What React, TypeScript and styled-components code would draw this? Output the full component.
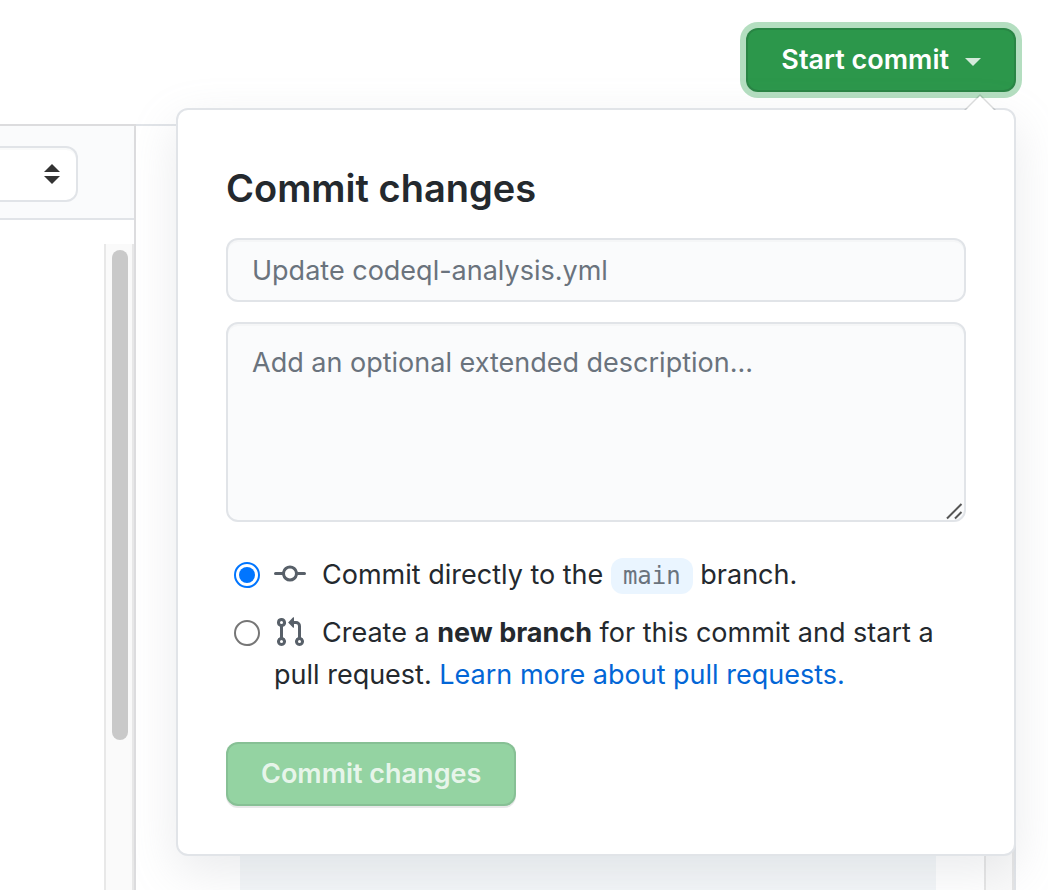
import React, { useState } from "react";
import styled, { createGlobalStyle } from "styled-components";

const GlobalStyle = createGlobalStyle`
  *, *::before, *::after { box-sizing: border-box; }
  body {
    margin: 0;
    background: #fff;
    color: #24292e;
    font-family: Inter, "Liberation Sans", sans-serif;
    font-size: 27px;
    line-height: 42px;
  }
`;

const Page = styled.div`
  min-height: 100vh;
  display: flex;
  flex-direction: column;
  overflow: hidden;
`;

const Header = styled.header`
  display: flex;
  justify-content: flex-end;
  padding: 28px 32px 32px;
`;

const CommitMenu = styled.div`
  position: relative;
`;

const Button = styled.button`
  display: flex;
  align-items: center;
  gap: 16px;
  height: 64px;
  padding: 0 33px;
  border: 2px solid rgba(27, 31, 35, 0.15);
  border-radius: 12px;
  background: #2c974b;
  color: #fff;
  font: inherit;
  font-weight: 600;
  white-space: nowrap;
  cursor: pointer;

  &:disabled {
    background: #94d3a2;
    border-color: rgba(27, 31, 35, 0.1);
    color: rgba(255, 255, 255, 0.8);
    box-shadow: 0 2px 0 rgba(27, 31, 35, 0.1);
    cursor: default;
  }
`;

const StartButton = styled(Button)`
  box-shadow: 0 0 0 6px rgba(46, 164, 79, 0.36);
`;

const DropdownCaret = styled.span`
  margin-top: 4px;
  border: 8px solid transparent;
  border-top-color: rgba(255, 255, 255, 0.8);
  border-bottom-width: 0;
`;

const Popover = styled.form`
  position: absolute;
  z-index: 1;
  top: 80px;
  right: 0;
  width: 840px;
  max-width: calc(100vw - 64px);
  padding: 48px;
  border: 2px solid #e1e4e8;
  border-radius: 12px;
  background: #fff;
  box-shadow: 0 16px 48px rgba(149, 157, 165, 0.2);

  &::before,
  &::after {
    content: "";
    position: absolute;
    border-style: solid;
    border-color: transparent;
    border-top-width: 0;
  }
  &::before {
    top: -16px;
    right: 18px;
    border-width: 0 16px 16px;
    border-bottom-color: rgba(27, 31, 35, 0.15);
  }
  &::after {
    top: -14px;
    right: 20px;
    border-width: 0 14px 14px;
    border-bottom-color: #fff;
  }
`;

const Title = styled.h2`
  margin: 0 0 20px;
  font-size: 38px;
  line-height: 60px;
  font-weight: 600;
`;

const fieldStyle = `
  display: block;
  width: 100%;
  border: 2px solid #e1e4e8;
  border-radius: 12px;
  background: #fafbfc;
  box-shadow: inset 0 2px 0 rgba(225, 228, 232, 0.2);
  color: #24292e;
  font: inherit;
  outline: none;
  &::placeholder { color: #6a737d; opacity: 1; }
`;

const TextInput = styled.input`
  ${fieldStyle}
  height: 64px;
  padding: 0 24px;
  margin-bottom: 20px;
`;

const DescriptionField = styled.div`
  position: relative;
  margin-bottom: 32px;
`;

const TextArea = styled.textarea`
  ${fieldStyle}
  height: 200px;
  padding: 18px 24px;
  resize: vertical;
  &::-webkit-resizer { background: transparent; }
`;

const ResizeGrip = styled.svg`
  position: absolute;
  right: 2px;
  bottom: 2px;
  pointer-events: none;
`;

const Option = styled.div`
  display: flex;
  align-items: flex-start;
  padding-left: 8px;
  margin-bottom: 16px;
`;

const Radio = styled.input`
  appearance: none;
  flex: none;
  display: grid;
  place-items: center;
  width: 26px;
  height: 26px;
  margin: 8px 14px 0 0;
  border: 2px solid #767676;
  border-radius: 50%;
  background: #fff;

  &:checked { border-color: #0075ff; }
  &:checked::before {
    content: "";
    width: 16px;
    height: 16px;
    border-radius: 50%;
    background: #0075ff;
  }
`;

const OptionIcon = styled.svg`
  width: 32px;
  height: 32px;
  margin-right: 16px;
  vertical-align: -6px;
  fill: #586069;
`;

const BranchName = styled.code`
  display: inline-block;
  padding: 0 12px;
  border-radius: 12px;
  background: #eaf5ff;
  color: #6a737d;
  font-family: "DejaVu Sans Mono", "Liberation Mono", monospace;
  font-size: 24px;
  line-height: 36px;
`;

const Link = styled.a`
  color: #0366d6;
  text-decoration: none;
`;

const Actions = styled.div`
  display: flex;
  padding-top: 30px;
`;

const Workspace = styled.main`
  flex: 1;
  display: flex;
  padding-right: 32px;
`;

const EditorPane = styled.section`
  flex: none;
  width: 136px;
  display: flex;
  flex-direction: column;
  border-top: 2px solid #dcdcde;
  border-right: 2px solid #dcdcde;
`;

const EditorToolbar = styled.div`
  padding: 20px 56px 16px 0;
  border-bottom: 2px solid #e1e4e8;
  background: #fafbfc;
`;

const SelectBox = styled.div`
  display: grid;
  grid-template-columns: 1fr;
  align-items: center;
  justify-items: end;
  > * { grid-area: 1 / 1; }
`;

const Select = styled.select`
  appearance: none;
  width: 100%;
  height: 56px;
  border: 2px solid #e1e4e8;
  border-left: 0;
  border-radius: 0 12px 12px 0;
  background: #fff;
  box-shadow: inset 0 2px 0 rgba(225, 228, 232, 0.2);
  color: #24292e;
  font: inherit;
`;

const SelectArrows = styled.svg`
  margin-right: 18px;
  fill: #333;
  pointer-events: none;
`;

const ScrollTrack = styled.div`
  flex: 1;
  align-self: flex-end;
  width: 30px;
  margin-top: 24px;
  padding: 6px;
  border: solid #e8e8e8;
  border-width: 0 2px;
  background: #fafafa;
`;

const ScrollThumb = styled.div`
  width: 16px;
  height: 490px;
  border-radius: 8px;
  background: #c9c9c9;
`;

const DocsPane = styled.section`
  flex: 1;
  display: flex;
  border: solid #e1e4e8;
  border-width: 2px 2px 0 0;
`;

const DocsBody = styled.div`
  flex: 1;
  padding: 96px 48px 0 104px;
  display: flex;
`;

const CodeSample = styled.div`
  flex: 1;
  background: #f3f6f8;
`;

const DocsTrack = styled.div`
  width: 30px;
  border: solid #e5e5e5;
  border-width: 0 2px;
  background: #fafafa;
`;

export default function App() {
  const [target, setTarget] = useState("direct");

  return (
    <>
      <GlobalStyle />
      <Page>
        <Header>
          <CommitMenu>
            <StartButton type="button" aria-expanded="true">
              Start commit
              <DropdownCaret />
            </StartButton>
            <Popover>
              <Title>Commit changes</Title>
              <TextInput aria-label="Commit message" placeholder="Update codeql-analysis.yml" />
              <DescriptionField>
                <TextArea
                  aria-label="Extended description"
                  placeholder="Add an optional extended description..."
                />
                <ResizeGrip width="18" height="18" viewBox="0 0 18 18" fill="none" stroke="#555" strokeWidth="2">
                  <path d="M1 16.500L15.500 2M9 16.500L15.500 10" />
                </ResizeGrip>
              </DescriptionField>
              <Option>
                <Radio
                  type="radio"
                  name="target"
                  id="target-direct"
                  checked={target === "direct"}
                  onChange={() => setTarget("direct")}
                />
                <label htmlFor="target-direct">
                  <OptionIcon viewBox="0 0 16 16" aria-hidden="true">
                    <path
                      fillRule="evenodd"
                      d="M10.5 7.75a2.5 2.5 0 11-5 0 2.5 2.5 0 015 0zm1.43.75a4.002 4.002 0 01-7.86 0H.75a.75.75 0 110-1.5h3.32a4.001 4.001 0 017.86 0h3.32a.75.75 0 110 1.5h-3.32z"
                    />
                  </OptionIcon>
                  Commit directly to the <BranchName>main</BranchName> branch.
                </label>
              </Option>
              <Option>
                <Radio
                  type="radio"
                  name="target"
                  id="target-branch"
                  checked={target === "branch"}
                  onChange={() => setTarget("branch")}
                />
                <label htmlFor="target-branch">
                  <OptionIcon viewBox="0 0 16 16" aria-hidden="true">
                    <path
                      fillRule="evenodd"
                      d="M7.177 3.073L9.573.677A.25.25 0 0110 .854v4.792a.25.25 0 01-.427.177L7.177 3.427a.25.25 0 010-.354zM3.75 2.5a.75.75 0 100 1.5.75.75 0 000-1.5zm-2.25.75a2.25 2.25 0 113 2.122v5.256a2.251 2.251 0 11-1.5 0V5.372A2.25 2.25 0 011.5 3.25zM11 2.5h-1V4h1a1 1 0 011 1v5.628a2.251 2.251 0 101.5 0V5A2.5 2.5 0 0011 2.5zm1 10.25a.75.75 0 111.5 0 .75.75 0 01-1.5 0zM3.75 12a.75.75 0 100 1.5.75.75 0 000-1.5z"
                    />
                  </OptionIcon>
                  Create a <strong>new branch</strong> for this commit and start a pull request.{" "}
                  <Link href="#pull-requests">Learn more about pull requests.</Link>
                </label>
              </Option>
              <Actions>
                <Button type="submit" disabled>
                  Commit changes
                </Button>
              </Actions>
            </Popover>
          </CommitMenu>
        </Header>
        <Workspace>
          <EditorPane>
            <EditorToolbar>
              <SelectBox>
                <Select aria-label="Line wrap mode" />
                <SelectArrows width="16" height="20" viewBox="0 0 16 20" aria-hidden="true">
                  <path d="M0 8L8 0L16 8ZM0 12H16L8 20Z" />
                </SelectArrows>
              </SelectBox>
            </EditorToolbar>
            <ScrollTrack>
              <ScrollThumb />
            </ScrollTrack>
          </EditorPane>
          <DocsPane>
            <DocsBody>
              <CodeSample />
            </DocsBody>
            <DocsTrack />
          </DocsPane>
        </Workspace>
      </Page>
    </>
  );
}
